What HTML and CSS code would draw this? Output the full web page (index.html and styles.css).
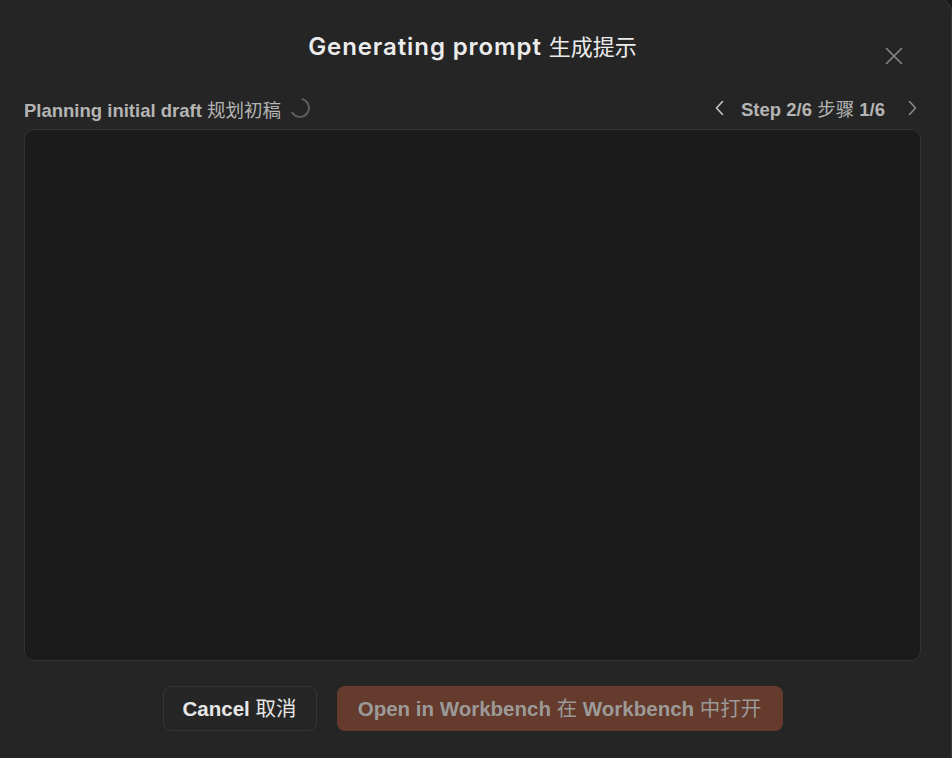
FILE: index.html
```html
<!DOCTYPE html>
<html lang="zh-CN">
<head>
    <meta charset="UTF-8">
    <meta name="viewport" content="width=device-width, initial-scale=1.0">
    <title>Generating prompt</title>
    <link rel="stylesheet" href="styles.css">
</head>
<body>
    <div class="dialog">
        <header class="dialog-header">
            <h1>Generating prompt <span class="cjk">生成提示</span></h1>
            <button class="close-btn" aria-label="Close">
                <svg width="18" height="18" viewBox="0 0 18 18" fill="none" stroke="currentColor" stroke-width="1.5" stroke-linecap="round">
                    <path d="M1.5 1.5L16.5 16.5M16.5 1.5L1.5 16.5"/>
                </svg>
            </button>
        </header>

        <div class="status-row">
            <div class="status">
                <span>Planning initial draft <span class="cjk">规划初稿</span></span>
                <svg class="spinner" width="22" height="22" viewBox="0 0 22 22" fill="none">
                    <path d="M13.5 2.3A9 9 0 1 1 3.2 15.5" stroke="#5e5e5e" stroke-width="2" stroke-linecap="round"/>
                </svg>
            </div>
            <div class="steps">
                <button class="step-arrow" aria-label="Previous">
                    <svg width="10" height="16" viewBox="0 0 10 16" fill="none" stroke="currentColor" stroke-width="1.6" stroke-linecap="round" stroke-linejoin="round">
                        <path d="M7.5 1.5L1.5 8L7.5 14.5"/>
                    </svg>
                </button>
                <span>Step 2/6 <span class="cjk">步骤</span> 1/6</span>
                <button class="step-arrow dim" aria-label="Next">
                    <svg width="10" height="16" viewBox="0 0 10 16" fill="none" stroke="currentColor" stroke-width="1.6" stroke-linecap="round" stroke-linejoin="round">
                        <path d="M2.5 1.5L8.5 8L2.5 14.5"/>
                    </svg>
                </button>
            </div>
        </div>

        <div class="output"></div>

        <footer class="actions">
            <button class="btn btn-cancel">Cancel <span class="cjk">取消</span></button>
            <button class="btn btn-open" disabled>Open in Workbench <span class="cjk">在</span> Workbench <span class="cjk">中打开</span></button>
        </footer>
    </div>
</body>
</html>
```

FILE: styles.css
```css
* {
    margin: 0;
    padding: 0;
    box-sizing: border-box;
}

body {
    background-color: #1a1a1a;
    font-family: "Liberation Sans", Arial, "Noto Sans CJK SC", sans-serif;
    color: #e8e8e8;
    overflow: hidden;
}

.cjk {
    font-family: "Noto Sans CJK SC", sans-serif;
    font-weight: 400;
}

.dialog {
    width: 964px;
    height: 772px;
    margin-left: -12px;
    margin-top: -1px;
    padding: 0 30px 0 35px;
    background-color: #252525;
    border: 1px solid #383838;
    border-radius: 12px;
    display: flex;
    flex-direction: column;
}

.dialog-header {
    display: flex;
    justify-content: center;
    padding-top: 29px;
    height: 96px;
    position: relative;
}

.dialog-header h1 {
    font-family: Inter, "Noto Sans CJK SC", sans-serif;
    font-size: 24px;
    font-weight: 600;
    letter-spacing: 0.9px;
    line-height: 32px;
    color: #ececec;
}

.dialog-header h1 .cjk {
    font-size: 22px;
    letter-spacing: 0;
}

.close-btn {
    position: absolute;
    right: 18px;
    top: 47px;
    background: none;
    border: none;
    color: #8c8c8c;
    display: flex;
}

.status-row {
    display: flex;
    justify-content: space-between;
    align-items: center;
    font-size: 18.5px;
    font-weight: bold;
    color: #b4b4b4;
    height: 33px;
    margin-top: -4px;
    padding-right: 2px;
}

.status {
    display: flex;
    align-items: center;
    gap: 8px;
}

.spinner {
    margin-top: -2px;
}

.steps {
    display: flex;
    align-items: center;
    gap: 14px;
    margin-top: -1px;
}

.step-arrow {
    background: none;
    border: none;
    color: #c4c4c4;
    display: flex;
    padding: 0 2px;
}

.step-arrow.dim {
    color: #8a8a8a;
    margin-left: 6px;
}

.output {
    height: 532px;
    margin-top: 4px;
    background-color: #1b1b1b;
    border: 1px solid #333333;
    border-radius: 10px;
}

.actions {
    display: flex;
    justify-content: center;
    gap: 20px;
    margin-top: 25px;
}

.btn {
    height: 45px;
    border-radius: 8px;
    font-family: "Liberation Sans", Arial, "Noto Sans CJK SC", sans-serif;
    font-size: 20.5px;
    font-weight: bold;
    padding: 0 12px 3px;
}

.btn-cancel {
    width: 154px;
    background-color: #262626;
    border: 1px solid #353535;
    color: #e6e6e6;
}

.btn-open {
    width: 446px;
    background-color: #643b2c;
    border: none;
    color: #9c9a98;
}
```
